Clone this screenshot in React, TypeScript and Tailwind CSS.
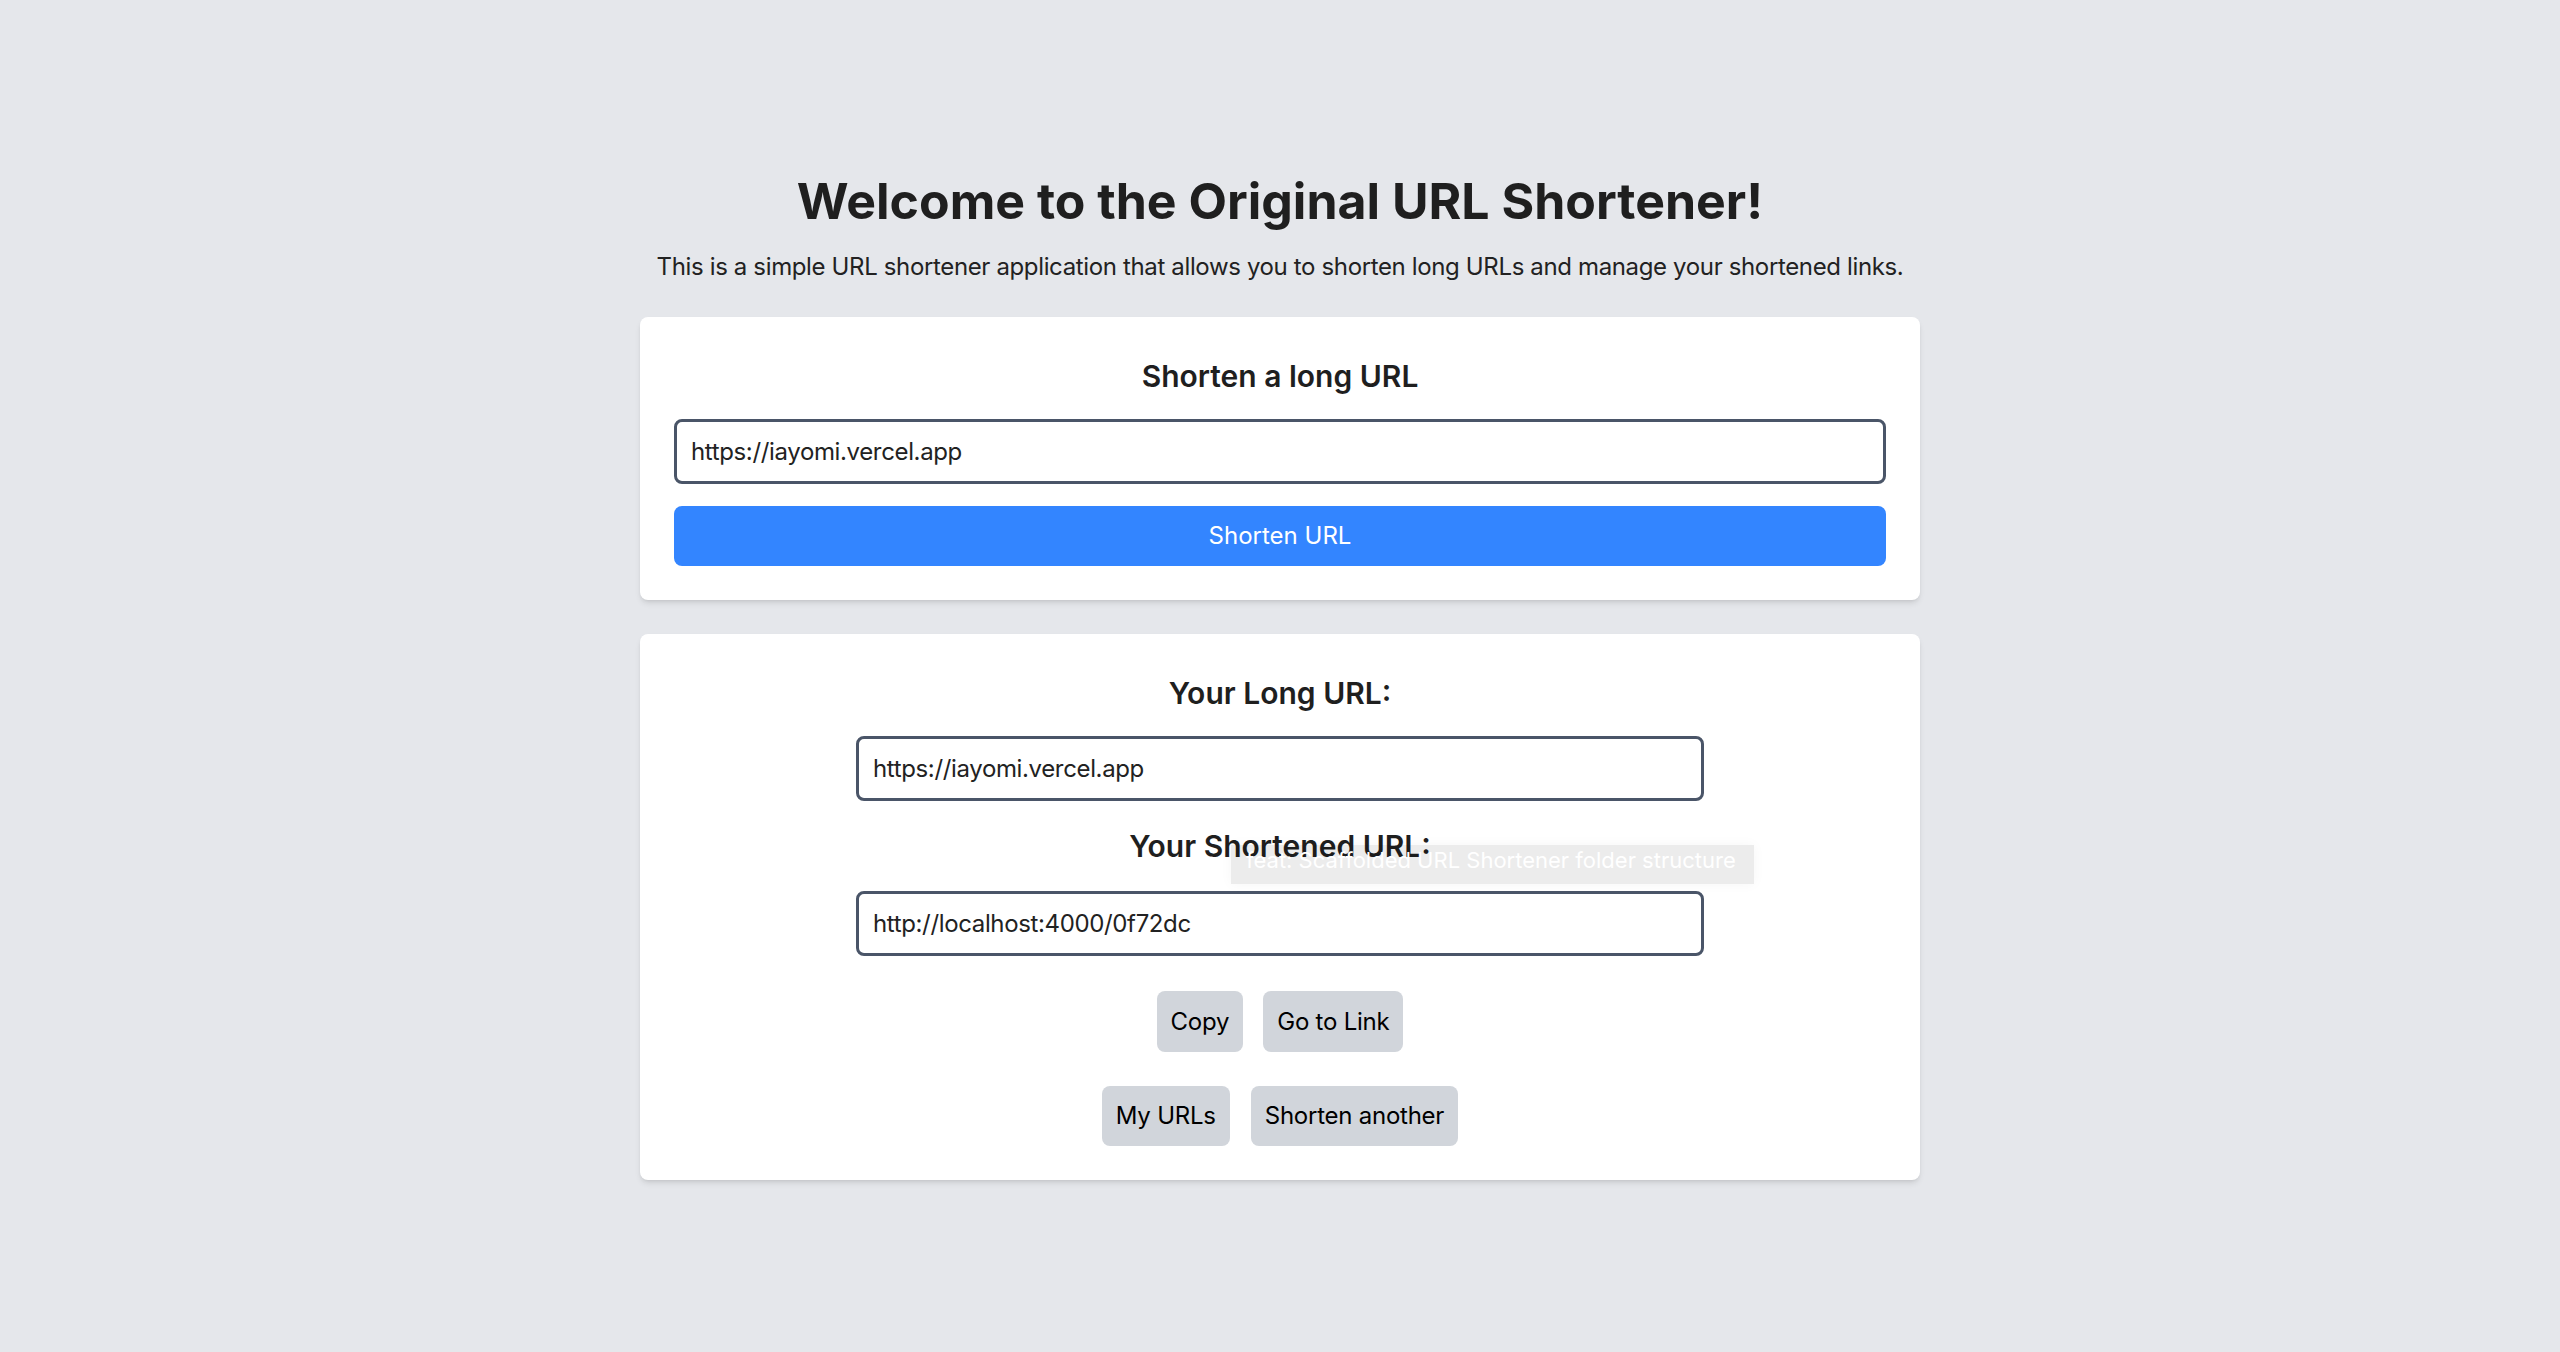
import { useState } from 'react'

export default function App() {
  const [longUrl, setLongUrl] = useState('https://iayomi.vercel.app')

  return (
    <div className="flex min-h-screen flex-col items-center bg-[#e5e7eb] pt-[172px] font-['Inter',sans-serif] text-[#1f1f1f]">
      <h1 className="text-[50px] font-bold leading-[58px]">
        Welcome to the Original URL Shortener!
      </h1>
      <p className="mt-[22px] text-[24px] leading-[29px] tracking-[-0.015em] text-[#222]">
        This is a simple URL shortener application that allows you to shorten long URLs and manage your shortened links.
      </p>

      <section className="mt-[36px] w-[1280px] rounded-lg bg-white px-[34px] pb-[34px] pt-[41px] shadow-md">
        <h2 className="text-center text-[30px] font-semibold leading-[36px]">Shorten a long URL</h2>
        <input
          value={longUrl}
          onChange={(e) => setLongUrl(e.target.value)}
          className="mt-[25px] block h-[65px] w-full rounded-lg border-[3px] border-[#4a5568] bg-white px-[14px] text-[24px] tracking-[-0.015em] text-[#222] outline-none"
        />
        <button
          type="button"
          className="mt-[22px] block h-[60px] w-full rounded-lg bg-[#3385ff] text-[24px] text-white"
        >
          Shorten URL
        </button>
      </section>

      <section className="relative mt-[34px] w-[1280px] rounded-lg bg-white px-[34px] pb-[34px] pt-[41px] shadow-md">
        <h2 className="text-center text-[30px] font-semibold leading-[36px]">Your Long URL:</h2>
        <input
          readOnly
          value="https://iayomi.vercel.app"
          className="mx-auto mt-[25px] block h-[65px] w-[848px] rounded-lg border-[3px] border-[#4a5568] bg-white px-[14px] text-[24px] tracking-[-0.015em] text-[#222] outline-none"
        />
        <h2 className="mt-[27px] text-center text-[30px] font-semibold leading-[36px]">Your Shortened URL:</h2>
        <input
          readOnly
          value="http://localhost:4000/0f72dc"
          className="mx-auto mt-[27px] block h-[65px] w-[848px] rounded-lg border-[3px] border-[#4a5568] bg-white px-[14px] text-[24px] tracking-[-0.015em] text-[#222] outline-none"
        />

        <div className="mt-[35px] flex justify-center gap-[20px]">
          <button type="button" className="h-[61px] rounded-lg bg-[#d1d5db] px-[14px] text-[24px] tracking-[-0.01em] text-black">
            Copy
          </button>
          <button type="button" className="h-[61px] rounded-lg bg-[#d1d5db] px-[14px] text-[24px] tracking-[-0.01em] text-black">
            Go to Link
          </button>
        </div>
        <div className="mt-[34px] flex justify-center gap-[21px]">
          <button type="button" className="h-[60px] rounded-lg bg-[#d1d5db] px-[14px] text-[24px] tracking-[-0.01em] text-black">
            My URLs
          </button>
          <button type="button" className="h-[60px] rounded-lg bg-[#d1d5db] px-[14px] text-[24px] tracking-[-0.01em] text-black">
            Shorten another
          </button>
        </div>

        {/* drag ghost left over from another window */}
        <div className="pointer-events-none absolute left-[591px] top-[211px] h-[39px] w-[523px] bg-black/[0.075] pl-[15px] pt-[1px] text-[22px] leading-[29px] text-white shadow-[0_0_12px_rgba(0,0,0,0.04)]">
          feat: Scaffolded URL Shortener folder structure
        </div>
      </section>
    </div>
  )
}
